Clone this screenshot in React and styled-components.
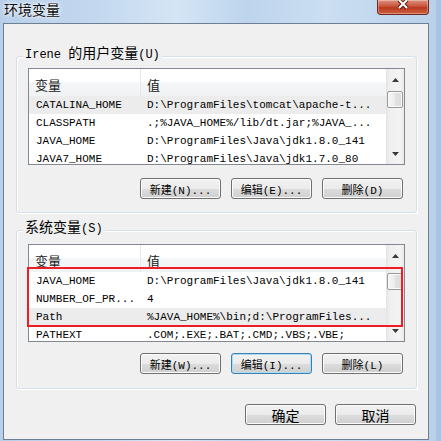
import styled, { createGlobalStyle } from "styled-components"

const MONO = `"Liberation Mono", "Noto Sans CJK SC", monospace`;
const CJK = `"Noto Sans CJK SC", "Liberation Sans", sans-serif`;

const GlobalStyle = createGlobalStyle`
  html, body {
    margin: 0;
    padding: 0;
  }
  body {
    width: 441px;
    height: 441px;
    overflow: hidden;
    background: #bcd4ec;
  }
`;

const Window = styled.div`
  width: 441px;
  height: 441px;
  box-sizing: border-box;
  display: flex;
  flex-direction: column;
  background: linear-gradient(90deg, #b8cfe9 0%, #c3d8ef 22%, #d5e5f5 40%, #bdd4ed 56%, #cbdef2 74%, #b9d0ea 100%);
  box-shadow: inset -5px 0 0 #a9c4e3;
`;

const TitleBar = styled.div`
  height: 23px;
  flex: none;
  display: flex;
  justify-content: space-between;
  align-items: flex-start;
  padding-left: 4px;
`;

const Title = styled.div`
  font-family: ${CJK};
  font-size: 14px;
  line-height: 18px;
  color: #111;
  text-shadow: 0 0 6px #fff, 0 0 3px #fff;
`;

const CloseButton = styled.div`
  width: 52px;
  height: 15px;
  margin-right: 12px;
  box-sizing: border-box;
  border: 1px solid #6e2a20;
  border-top: none;
  border-radius: 0 0 4px 4px;
  background: linear-gradient(#dc9480 0%, #c9533a 45%, #b8391f 55%, #d0603f 100%);
  box-shadow: inset 0 0 0 1px rgba(255, 255, 255, 0.3);
  display: flex;
  justify-content: center;
  align-items: flex-start;
`;

const Client = styled.div`
  flex: 1;
  margin: 0 12px 1px 3px;
  border: 1px solid #6f7f93;
  background: #f0f0f0;
  padding: 32px 11px 0 12px;
  display: flex;
  flex-direction: column;
`;

const Group = styled.div`
  position: relative;
  border: 1px solid #d5dfe5;
  border-radius: 3px;
  box-shadow: inset 1px 1px 0 #fff, 1px 1px 0 #fff;
  margin-top: ${p => p.$mt || 0}px;
  padding: ${p => p.$pt}px 11px ${p => p.$pb}px 11px;
`;

const Legend = styled.div`
  position: absolute;
  left: 6px;
  top: -14px;
  padding: 0 2px;
  background: #f0f0f0;
  font-family: ${MONO};
  font-size: 12px;
  line-height: 18px;
  color: #000;
  white-space: nowrap;
`;

const Cjk = styled.span`
  font-family: ${CJK};
  font-size: 14px;
`;

const ListFrame = styled.div`
  position: relative;
`;

const ListBox = styled.div`
  height: ${p => p.$h}px;
  box-sizing: border-box;
  border: 1px solid #828790;
  background: #fff;
  display: flex;
  overflow: hidden;
`;

const ListMain = styled.div`
  flex: 1;
  min-width: 0;
  display: flex;
  flex-direction: column;
`;

const Header = styled.div`
  height: 27px;
  flex: none;
  display: flex;
  background: linear-gradient(#fff 0%, #fff 48%, #f5f6f7 50%, #f1f2f4 100%);
`;

const HeaderCell = styled.div`
  width: ${p => (p.$w ? `${p.$w}px` : "auto")};
  flex: ${p => (p.$w ? "none" : 1)};
  box-sizing: border-box;
  padding: 3px 0 0 6px;
  border-right: ${p => (p.$w ? "1px solid #e3e8ee" : "none")};
  display: flex;
  align-items: center;
  font-family: ${CJK};
  font-size: 13px;
  color: #1a1a1a;
`;

const Row = styled.div`
  height: 18px;
  flex: none;
  display: flex;
  background: ${p => (p.$selected ? "#ececec" : "transparent")};
  font-family: ${MONO};
  font-size: 11px;
  line-height: 18px;
  color: #000;
`;

const Cell = styled.div`
  width: ${p => (p.$w ? `${p.$w}px` : "auto")};
  flex: ${p => (p.$w ? "none" : 1)};
  box-sizing: border-box;
  padding-left: ${p => (p.$w ? 7 : 6)}px;
  white-space: nowrap;
  overflow: hidden;
`;

const ScrollBar = styled.div`
  width: 18px;
  flex: none;
  display: flex;
  flex-direction: column;
  background: linear-gradient(90deg, #e4e4e4 0%, #efefef 20%, #f4f4f4 80%, #e9e9e9 100%);
`;

const ArrowBox = styled.div`
  height: ${p => p.$h}px;
  flex: none;
  display: flex;
  justify-content: center;
  align-items: center;
`;

const Track = styled.div`
  flex: 1;
  padding: 0 1px;
`;

const Thumb = styled.div`
  margin-top: ${p => p.$top}px;
  height: 17px;
  box-sizing: border-box;
  border: 1px solid #9a9a9a;
  border-radius: 2px;
  background: linear-gradient(90deg, #f6f6f6 0%, #ececec 50%, #e2e2e2 51%, #dcdcdc 100%);
  box-shadow: inset 0 0 0 1px #fafafa;
`;

const Highlight = styled.div`
  position: absolute;
  left: -1px;
  top: 23px;
  width: 376px;
  height: 60px;
  box-sizing: border-box;
  border: 2px solid #ee1c24;
  pointer-events: none;
`;

const ButtonRow = styled.div`
  margin-top: ${p => p.$mt}px;
  display: flex;
  justify-content: flex-end;
  gap: ${p => p.$gap || 10}px;
  padding-right: ${p => p.$pr || 0}px;
`;

const Button = styled.button`
  width: 81px;
  height: 21px;
  box-sizing: border-box;
  padding: 0;
  border: 1px solid ${p => (p.$focus ? "#3c7fb1" : "#707070")};
  border-radius: 3px;
  background: linear-gradient(#f2f2f2 0%, #ebebeb 50%, #dddddd 51%, #cfcfcf 100%);
  box-shadow: inset 0 0 0 1px ${p => (p.$focus ? "#a8dcf8" : "#fbfbfb")};
  display: flex;
  justify-content: center;
  align-items: center;
  font-family: ${p => (p.$big ? CJK : MONO)};
  font-size: ${p => (p.$big ? 14 : 11)}px;
  color: #000;
  white-space: nowrap;
`;

const Arrow = ({ up }) => (
  <svg width="7" height="4" viewBox="0 0 7 4">
    <polygon points={up ? "3.5,0 7,4 0,4" : "0,0 7,0 3.5,4"} fill="#3a3a3a" />
  </svg>
);

const COL = 112;

const VarList = ({ h, rows, thumbTop, marked }) => (
  <ListFrame>
    <ListBox $h={h}>
      <ListMain>
        <Header>
          <HeaderCell $w={COL}>变量</HeaderCell>
          <HeaderCell>值</HeaderCell>
        </Header>
        {rows.map(r => (
          <Row key={r[0]} $selected={r[2]}>
            <Cell $w={COL}>{r[0]}</Cell>
            <Cell>{r[1]}</Cell>
          </Row>
        ))}
      </ListMain>
      <ScrollBar>
        <ArrowBox $h={21}><Arrow up /></ArrowBox>
        <Track><Thumb $top={thumbTop} /></Track>
        <ArrowBox $h={20}><Arrow /></ArrowBox>
      </ScrollBar>
    </ListBox>
    {marked && <Highlight />}
  </ListFrame>
);

export default () => {
  const userVars = [
    ["CATALINA_HOME", "D:\\ProgramFiles\\tomcat\\apache-t...", true],
    ["CLASSPATH", ".;%JAVA_HOME%/lib/dt.jar;%JAVA_..."],
    ["JAVA_HOME", "D:\\ProgramFiles\\Java\\jdk1.8.0_141"],
    ["JAVA7_HOME", "D:\\ProgramFiles\\Java\\jdk1.7.0_80"],
  ];

  const sysVars = [
    ["JAVA_HOME", "D:\\ProgramFiles\\Java\\jdk1.8.0_141"],
    ["NUMBER_OF_PR...", "4"],
    ["Path", "%JAVA_HOME%\\bin;d:\\ProgramFiles...", true],
    ["PATHEXT", ".COM;.EXE;.BAT;.CMD;.VBS;.VBE;"],
  ];

  return (
    <>
      <GlobalStyle />
      <Window>
        <TitleBar>
          <Title>环境变量</Title>
          <CloseButton>
            <svg width="12" height="10" viewBox="0 0 12 10">
              <path d="M2 0 L10 8 M10 0 L2 8" stroke="#5a1c12" strokeWidth="4" />
              <path d="M2 0 L10 8 M10 0 L2 8" stroke="#fff" strokeWidth="2" />
            </svg>
          </CloseButton>
        </TitleBar>

        <Client>
          <Group $pt={11} $pb={13}>
            <Legend>Irene <Cjk>的用户变量</Cjk>(U)</Legend>
            <VarList h={97} rows={userVars} thumbTop={1} />
            <ButtonRow $mt={13} $pr={2}>
              <Button>新建(N)...</Button>
              <Button>编辑(E)...</Button>
              <Button>删除(D)</Button>
            </ButtonRow>
          </Group>

          <Group $mt={17} $pt={13} $pb={14}>
            <Legend><Cjk>系统变量</Cjk>(S)</Legend>
            <VarList h={98} rows={sysVars} thumbTop={7} marked />
            <ButtonRow $mt={11} $pr={2}>
              <Button>新建(W)...</Button>
              <Button $focus>编辑(I)...</Button>
              <Button>删除(L)</Button>
            </ButtonRow>
          </Group>

          <ButtonRow $mt={15} $gap={9} $pr={1}>
            <Button $big>确定</Button>
            <Button $big>取消</Button>
          </ButtonRow>
        </Client>
      </Window>
    </>
  )
}
